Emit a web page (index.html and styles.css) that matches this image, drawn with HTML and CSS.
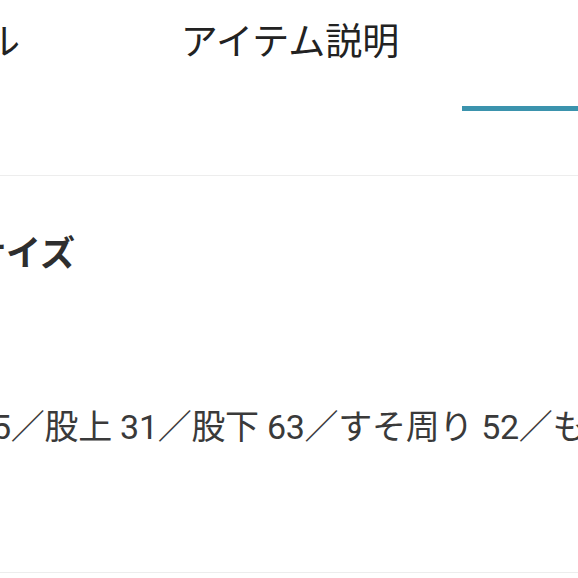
FILE: index.html
```html
<!DOCTYPE html>
<html lang="ja">

<head>
    <meta charset="UTF-8">
    <meta name="viewport" content="width=device-width, initial-scale=1.0">
    <title>アイテム説明</title>
    <link rel="stylesheet" href="styles.css">
</head>

<body>
    <div class="screen">
        <!-- タブ -->
        <div class="tabs">
            <div class="tab">スタイル</div>
            <div class="tab">アイテム説明</div>
            <div class="tab active">サイズ</div>
        </div>

        <!-- サイズ -->
        <div class="section">
            <h2 class="section-title">サイズ</h2>
            <p class="size-text">ヒップ 95／股上 31／股下 63／すそ周り 52／もも周り 60</p>
        </div>
    </div>
</body>

</html>
```

FILE: styles.css
```css
body {
    margin: 0;
    overflow: hidden;
    background: #fff;
    font-family: Roboto, "Noto Sans CJK JP", sans-serif;
    color: #333;
}

/* 画面の左側ははみ出して見えない */
.screen {
    width: 1032px;
    margin-left: -226px;
}

.tabs {
    display: flex;
    padding-bottom: 64px;
    border-bottom: 1px solid #ededed;
}

.tab {
    flex: 1;
    height: 82px;
    padding-top: 24px;
    line-height: 37px;
    font-size: 37px;
    text-align: center;
    color: #222;
    border-bottom: 5px solid transparent;
}

.tab.active {
    border-bottom-color: #3b93ad;
}

.section {
    padding: 61px 0 128px;
    border-bottom: 1px solid #ededed;
}

.section-title {
    margin: 0 0 137px 197px;
    font-size: 35px;
    line-height: 36px;
    font-weight: bold;
    color: #2e2e2e;
}

.size-text {
    margin: 0 0 0 90px;
    font-size: 34px;
    line-height: 34px;
    letter-spacing: -0.3px;
    white-space: nowrap;
    color: #3a3a3a;
}
```
